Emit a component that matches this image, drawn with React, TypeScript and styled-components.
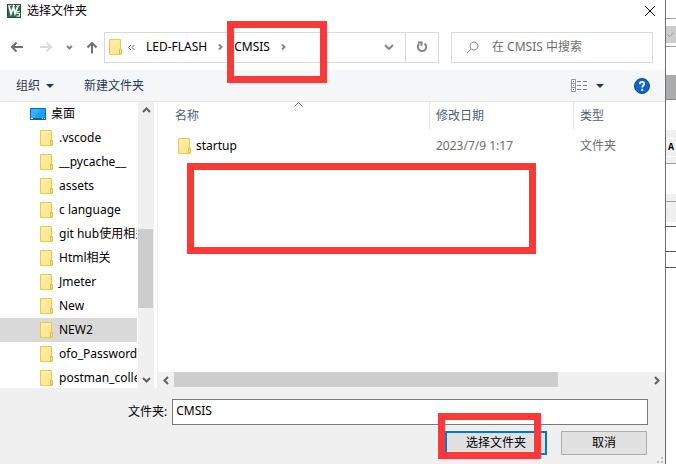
import React from "react";
import styled, { createGlobalStyle, css } from "styled-components";

const GlobalStyle = createGlobalStyle`
  * { box-sizing: border-box; }
  html, body, #root { height: 100%; margin: 0; }
  body {
    font-family: "Noto Sans", "Noto Sans CJK SC", sans-serif;
    font-size: 12px;
    line-height: 16px;
    color: #000;
    background: #fff;
    overflow: hidden;
  }
  button, input {
    font: inherit;
    color: inherit;
    margin: 0;
    padding: 0;
    border: 0;
    background: none;
    border-radius: 0;
    outline: none;
  }
  svg { display: block; flex: none; }
`;

const Desktop = styled.div`
  display: flex;
  height: 100vh;
`;

const Dialog = styled.main`
  flex: 1;
  min-width: 0;
  display: flex;
  flex-direction: column;
  border-right: 1px solid #6b6b6b;
  background: #fff;
`;

const TitleBar = styled.header`
  display: flex;
  align-items: center;
  gap: 6px;
  height: 24px;
  padding: 0 9px 2px 7px;
`;

const Title = styled.h1`
  flex: 1;
  margin: 0;
  font-size: 12px;
  font-weight: 400;
`;

const IconButton = styled.button`
  display: flex;
  align-items: center;
  justify-content: center;
`;

const NavBar = styled.nav`
  display: flex;
  align-items: center;
  height: 46px;
  padding: 0 12px 0 10px;
`;

const NavButtons = styled.div`
  display: flex;
  align-items: center;
  gap: 14px;
  width: 94px;
`;

const AddressBar = styled.div`
  flex: 1;
  display: flex;
  align-items: center;
  height: 31px;
  padding-left: 4px;
  border: 1px solid #d9d9d9;
`;

const Crumbs = styled.div`
  flex: 1;
  display: flex;
  align-items: center;
  margin-left: 5px;
`;

const Crumb = styled.button`
  position: relative;
  margin-right: 11px;
  padding-bottom: 1px;
`;

const CrumbArrow = styled(IconButton)`
  margin-right: 11px;
`;

const RefreshButton = styled(IconButton)`
  width: 33px;
  height: 100%;
  border-left: 1px solid #d9d9d9;
`;

const SearchBox = styled.label`
  display: flex;
  align-items: center;
  gap: 13px;
  width: 202px;
  height: 31px;
  margin-left: 12px;
  padding-left: 14px;
  border: 1px solid #d9d9d9;
`;

const SearchInput = styled.input`
  flex: 1;
  min-width: 0;
  &::placeholder { color: #6d6d6d; opacity: 1; }
`;

const Toolbar = styled.div`
  display: flex;
  align-items: center;
  height: 32px;
  padding: 0 15px 0 16px;
  color: #1e395b;
  background: #f5f6f7;
  border-bottom: 1px solid #e5e6e7;
`;

const ToolButton = styled.button`
  display: flex;
  align-items: center;
  gap: 6px;
  margin-right: 30px;
`;

const Spacer = styled.div`
  flex: 1;
`;

const ViewButton = styled(IconButton)`
  gap: 8px;
  margin-right: 30px;
`;

const Body = styled.div`
  flex: 1;
  min-height: 0;
  display: flex;
`;

const Sidebar = styled.aside`
  flex: none;
  display: flex;
  width: 158px;
  padding-right: 3px;
  border-right: 1px solid #f0f0f0;
`;

const Tree = styled.ul`
  flex: 1;
  min-width: 0;
  margin: 0;
  padding: 0 1px 0 0;
  overflow: hidden;
  list-style: none;
`;

const TreeItem = styled.li<{ $root?: boolean; $selected?: boolean }>`
  display: flex;
  align-items: center;
  gap: ${(p) => (p.$root ? 5 : 6)}px;
  height: 24px;
  padding-left: ${(p) => (p.$root ? 30 : 40)}px;
  overflow: hidden;
  white-space: nowrap;
  background: ${(p) => (p.$selected ? "#d9d9d9" : "none")};
`;

const ScrollBar = styled.div<{ $horizontal?: boolean }>`
  flex: none;
  display: flex;
  background: #f0f0f0;
  ${(p) =>
    p.$horizontal
      ? css`
          height: 16px;
        `
      : css`
          flex-direction: column;
          width: 16px;
        `}
`;

const ScrollButton = styled(IconButton)`
  flex: none;
  width: 16px;
  height: 16px;
`;

const ScrollGap = styled.div<{ $grow: number }>`
  flex: ${(p) => p.$grow} 1 0;
`;

const ScrollThumb = styled.div<{ $grow: number; $horizontal?: boolean }>`
  flex: ${(p) => p.$grow} 1 0;
  margin: ${(p) => (p.$horizontal ? "0 0 1px" : "0 1px 0 0")};
  background: #cdcdcd;
`;

const Content = styled.section`
  position: relative;
  flex: 1;
  min-width: 0;
  display: flex;
  flex-direction: column;
`;

const FileArea = styled.div`
  flex: 1;
`;

const FileTable = styled.table`
  width: 100%;
  table-layout: fixed;
  border-collapse: separate;
  border-spacing: 0;
`;

const HeadCell = styled.th<{ $width?: number }>`
  position: relative;
  width: ${(p) => (p.$width ? `${p.$width}px` : "auto")};
  height: 27px;
  padding: 0 0 0 6px;
  border-right: 1px solid #e5e5e5;
  font-weight: 400;
  text-align: left;
  color: #4c607a;
  &:first-child { padding-left: 17px; }
  &:last-child { border-right: 0; }
`;

const SortMark = styled.span`
  position: absolute;
  top: 0;
  left: 50%;
`;

const Cell = styled.td`
  height: 34px;
  padding: 0 0 0 6px;
  color: #6d6d6d;
  &:first-child { padding-left: 20px; }
`;

const FileName = styled.span`
  display: flex;
  align-items: center;
  gap: 5px;
  color: #000;
`;

const Marker = styled.span<{ $inset: string }>`
  position: absolute;
  inset: ${(p) => p.$inset};
  z-index: 1;
  border: 7px solid #fd3838;
  pointer-events: none;
`;

const Footer = styled.footer`
  position: relative;
  display: flex;
  flex-direction: column;
  gap: 6px;
  height: 76px;
  padding: 11px 17px 0 128px;
  background: #f0f0f0;
`;

const FolderField = styled.label`
  display: flex;
  align-items: center;
  gap: 5px;
`;

const FolderInput = styled.input`
  flex: 1;
  min-width: 0;
  height: 26px;
  padding: 0 3px 3px;
  background: #fff;
  border: 1px solid #7a7a7a;
`;

const Actions = styled.div`
  display: flex;
  justify-content: flex-end;
  gap: 14px;
  padding-right: 1px;
`;

const ActionSlot = styled.div`
  position: relative;
`;

const ActionButton = styled.button<{ $primary?: boolean }>`
  display: block;
  width: ${(p) => (p.$primary ? 102 : 86)}px;
  height: 24px;
  background: #e1e1e1;
  border: ${(p) => (p.$primary ? "2px solid #0078d7" : "1px solid #adadad")};
`;

const Grip = styled.svg`
  position: absolute;
  right: 2px;
  bottom: 1px;
`;

const Backdrop = styled.div`
  flex: none;
  width: 10px;
  overflow: hidden;
`;

const Band = styled.div<{ $height: number; $fill?: string; $line?: string }>`
  display: flex;
  align-items: center;
  justify-content: center;
  height: ${(p) => p.$height}px;
  background: ${(p) => p.$fill ?? "#fff"};
  border-bottom: ${(p) => (p.$line ? `1px solid ${p.$line}` : "0")};
  font: bold 10px/12px "Liberation Mono", monospace;
`;

const FolderIcon = () => (
  <svg width="13" height="16" viewBox="0 0 13 16" aria-hidden="true">
    <path d="M.5.5h11v15H.5z" fill="#ffe794" stroke="#ebc850" />
    <path d="M1 1h10L1 11z" fill="#ffeba6" />
    <path d="M10.500 10.500h2v4.500h-2z" fill="#ffe794" stroke="#e3b93c" />
  </svg>
);

const DesktopIcon = () => (
  <svg width="16" height="12" viewBox="0 0 16 12" aria-hidden="true">
    <path d="M.5.5h15v11H.5z" fill="#1ba1fa" stroke="#0a6cb8" />
    <path d="M1 1h10L4 10H1z" fill="#35b0ff" />
    <path d="M0 10h16v2H0z" fill="#0a62a8" />
    <path d="M1 10.500h2M12 10.500h1M14 10.500h1" stroke="#fff" />
  </svg>
);

const AppIcon = () => (
  <svg width="14" height="14" viewBox="0 0 14 14" aria-hidden="true">
    <path d="M0 0h14v14H0z" fill="#2b6b4b" />
    <path d="M.5.5h13v13H.5z" fill="none" stroke="#1c4f3a" />
    <path d="M1 1.500h3.500M5.500 1.500H8M9 1.500h4" stroke="#c6ddd0" />
    <path d="M2 2l2 7.500L6.500 3 8 9.500 11 2" fill="none" stroke="#fff" strokeWidth="1.800" />
    <path d="M13 7.500H10v2h2.500v2.700H9.500" fill="none" stroke="#e8f2ec" strokeWidth="1.200" />
  </svg>
);

type StrokeProps = { w: number; h: number; d: string; color?: string; width?: number };

const Stroke = ({ w, h, d, color = "#6b6b6b", width = 2 }: StrokeProps) => (
  <svg width={w} height={h} viewBox={`0 0 ${w} ${h}`} fill="none" stroke={color} strokeWidth={width} aria-hidden="true">
    <path d={d} />
  </svg>
);

const Caret = () => (
  <svg width="8" height="4" viewBox="0 0 8 4" aria-hidden="true">
    <path d="M0 0h8L4 4z" fill="#1e395b" />
  </svg>
);

const ViewIcon = () => (
  <svg width="17" height="13" viewBox="0 0 17 13" fill="none" aria-hidden="true">
    <path d="M.5.5h4v12h-4zM.5 4.500h4M.5 8.500h4" fill="#fff" stroke="#949494" />
    <path d="M2 2.500h1" stroke="#555" />
    <path d="M2 6.500h1" stroke="#2a7fd4" />
    <path d="M2 10.500h1" stroke="#d33" />
    <path d="M6 2.500h4M12 2.500h4M6 6.500h4M12 6.500h4M6 10.500h4M12 10.500h4" stroke="#808080" />
  </svg>
);

const HelpIcon = () => (
  <svg width="16" height="16" viewBox="0 0 16 16" aria-hidden="true">
    <circle cx="8" cy="8" r="7.500" fill="#0a66c8" stroke="#084a8c" />
    <path d="M5.800 6.200C5.800 3.200 10.300 3.300 10.200 6c0 1.500-2 1.600-2 3.500" fill="none" stroke="#fff" strokeWidth="1.800" />
    <path d="M7.200 10.800h2v2h-2z" fill="#fff" />
  </svg>
);

const folders = [
  ".vscode",
  "__pycache__",
  "assets",
  "c language",
  "git hub使用相关",
  "Html相关",
  "Jmeter",
  "New",
  "NEW2",
  "ofo_Password",
  "postman_collection",
];

export default function App() {
  return (
    <>
      <GlobalStyle />
      <Desktop>
        <Dialog>
          <TitleBar>
            <AppIcon />
            <Title>选择文件夹</Title>
            <IconButton aria-label="关闭">
              <Stroke w={12} h={12} d="M1 1l10 10M11 1L1 11" color="#000" width={1} />
            </IconButton>
          </TitleBar>

          <NavBar>
            <NavButtons>
              <IconButton aria-label="后退">
                <Stroke w={14} h={12} d="M13 6H2M6.500 1.500L2 6l4.500 4.500" color="#707070" />
              </IconButton>
              <IconButton aria-label="前进">
                <Stroke w={14} h={12} d="M2 6h11M8.500 1.500L13 6l-4.500 4.500" color="#dcdcdc" />
              </IconButton>
              <IconButton aria-label="最近位置">
                <Stroke w={7} h={5} d="M1 1l2.500 2.500L6 1" color="#858585" />
              </IconButton>
              <IconButton aria-label="向上">
                <Stroke w={10} h={13} d="M5 12.500V2M.5 6.500L5 2l4.500 4.500" color="#707070" />
              </IconButton>
            </NavButtons>
            <AddressBar>
              <FolderIcon />
              <Crumbs>
                <CrumbArrow aria-label="更多">
                  <Stroke w={8} h={7} d="M4 1L1.500 3.500 4 6M7.500 1L5 3.500 7.500 6" width={1} />
                </CrumbArrow>
                <Crumb>LED-FLASH</Crumb>
                <CrumbArrow aria-label="展开">
                  <Stroke w={5} h={6} d="M1 .5L3.500 3 1 5.500" color="#858585" />
                </CrumbArrow>
                <Crumb>
                  CMSIS
                  <Marker $inset="-18px -57px -27px -7px" />
                </Crumb>
                <CrumbArrow aria-label="展开">
                  <Stroke w={5} h={6} d="M1 .5L3.500 3 1 5.500" color="#858585" />
                </CrumbArrow>
                <Spacer />
                <CrumbArrow aria-label="历史记录">
                  <Stroke w={10} h={6} d="M1 1l4 4 4-4" color="#858585" />
                </CrumbArrow>
              </Crumbs>
              <RefreshButton aria-label="刷新">
                <Stroke w={12} h={12} d="M8.500 2.500A4.200 4.200 0 1 1 3 3M2 1.500h3.500V5" color="#858585" />
              </RefreshButton>
            </AddressBar>
            <SearchBox>
              <Stroke w={13} h={13} d="M5 8L1 12M8 1a4 4 0 1 0 .01 0z" color="#858585" width={1} />
              <SearchInput aria-label="搜索" placeholder="在 CMSIS 中搜索" />
            </SearchBox>
          </NavBar>

          <Toolbar>
            <ToolButton>
              组织
              <Caret />
            </ToolButton>
            <ToolButton>新建文件夹</ToolButton>
            <Spacer />
            <ViewButton aria-label="更改视图">
              <ViewIcon />
              <Caret />
            </ViewButton>
            <IconButton aria-label="帮助">
              <HelpIcon />
            </IconButton>
          </Toolbar>

          <Body>
            <Sidebar>
              <Tree>
                <TreeItem $root>
                  <DesktopIcon />
                  桌面
                </TreeItem>
                {folders.map((name) => (
                  <TreeItem key={name} $selected={name === "NEW2"}>
                    <FolderIcon />
                    {name}
                  </TreeItem>
                ))}
              </Tree>
              <ScrollBar>
                <ScrollButton aria-label="向上滚动">
                  <Stroke w={9} h={6} d="M1 5l3.500-3.500L8 5" color="#606060" />
                </ScrollButton>
                <ScrollGap $grow={111} />
                <ScrollThumb $grow={79} />
                <ScrollGap $grow={64} />
                <ScrollButton aria-label="向下滚动">
                  <Stroke w={9} h={6} d="M1 1l3.500 3.500L8 1" color="#606060" />
                </ScrollButton>
              </ScrollBar>
            </Sidebar>

            <Content>
              <FileArea>
                <FileTable>
                  <thead>
                    <tr>
                      <HeadCell>
                        名称
                        <SortMark>
                          <Stroke w={9} h={5} d="M.5 4.500l4-4 4 4" width={1} />
                        </SortMark>
                      </HeadCell>
                      <HeadCell $width={144}>修改日期</HeadCell>
                      <HeadCell $width={91}>类型</HeadCell>
                    </tr>
                  </thead>
                  <tbody>
                    <tr>
                      <Cell>
                        <FileName>
                          <FolderIcon />
                          startup
                        </FileName>
                      </Cell>
                      <Cell>2023/7/9 1:17</Cell>
                      <Cell>文件夹</Cell>
                    </tr>
                  </tbody>
                </FileTable>
              </FileArea>
              <ScrollBar $horizontal>
                <ScrollButton aria-label="向左滚动">
                  <Stroke w={6} h={9} d="M5 1L1.500 4.500 5 8" color="#606060" />
                </ScrollButton>
                <ScrollThumb $horizontal $grow={383} />
                <ScrollGap $grow={91} />
                <ScrollButton aria-label="向右滚动">
                  <Stroke w={6} h={9} d="M1 1l3.500 3.500L1 8" color="#606060" />
                </ScrollButton>
              </ScrollBar>
              <Marker $inset="61px 129px 134px 29px" />
            </Content>
          </Body>

          <Footer>
            <FolderField>
              文件夹:
              <FolderInput defaultValue="CMSIS" />
            </FolderField>
            <Actions>
              <ActionSlot>
                <ActionButton $primary>选择文件夹</ActionButton>
                <Marker $inset="-18px 6px -4px -7px" />
              </ActionSlot>
              <ActionButton>取消</ActionButton>
            </Actions>
            <Grip width="6" height="6" viewBox="0 0 6 6" aria-hidden="true">
              <path d="M4 0h2v2H4zM0 4h2v2H0zM4 4h2v2H4z" fill="#bdbdbd" />
            </Grip>
          </Footer>
        </Dialog>

        <Backdrop aria-hidden="true">
          <Band $height={19} $line="#a0a0a0" />
          <Band $height={7} />
          <Band $height={17} $fill="#cccccc">
            <Stroke w={8} h={6} d="M0 2l2.500 2.500L7 .5" color="#a0a0a0" width={1} />
          </Band>
          <Band $height={4} $line="#a0a0a0" />
          <Band $height={28} />
          <Band $height={25} $fill="#ababab" $line="#8c8c8c" />
          <Band $height={30} />
          <Band $height={8} $fill="#f0f0f0" />
          <Band $height={1} />
          <Band $height={17} $fill="#f0f0f0">A</Band>
          <Band $height={1} />
          <Band $height={7} $fill="#f0f0f0" $line="#a0a0a0" />
          <Band $height={30} />
          <Band $height={8} $fill="#f0f0f0" $line="#a0a0a0" />
          <Band $height={20} $fill="#f0f0f0" />
          <Band $height={5} $line="#555" />
          <Band $height={25} $line="#555" />
          <Band $height={16} $line="#555" />
        </Backdrop>
      </Desktop>
    </>
  );
}
